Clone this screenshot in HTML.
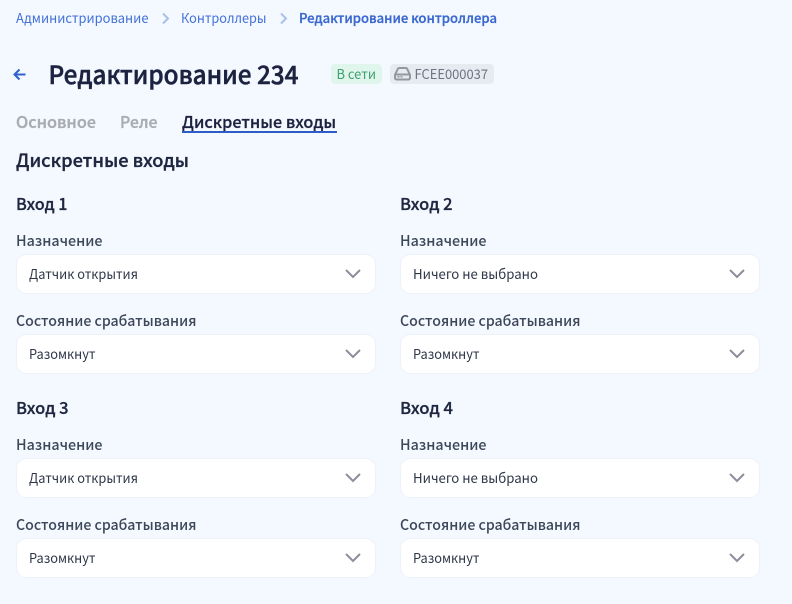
<!DOCTYPE html>
<html lang="ru">
<head>
<meta charset="utf-8">
<title>Редактирование 234</title>
<style>
html,body{margin:0;padding:0;width:792px;height:604px;overflow:hidden;background:#f4f8ff;}
svg{display:block;position:absolute;left:0;top:0;}
text{font-family:"Noto Sans CJK SC","Liberation Sans",sans-serif;}
.bc{font-size:13.5px;fill:#4271d6;font-weight:400;}
.bcb{font-size:13.5px;fill:#3a68cf;font-weight:500;stroke:#3a68cf;stroke-width:.3px;}
.h1{font-size:25px;fill:#1c2340;font-weight:500;stroke:#1c2340;stroke-width:.5px;}
.tab{font-size:16.5px;fill:#a9abb2;font-weight:500;stroke:#a9abb2;stroke-width:.35px;}
.tabon{font-size:16.5px;fill:#1c2340;font-weight:500;stroke:#1c2340;stroke-width:.25px;}
.h2{font-size:18.5px;fill:#1f2740;font-weight:500;stroke:#1f2740;stroke-width:.35px;}
.h3{font-size:16.5px;fill:#1f2740;font-weight:500;stroke:#1f2740;stroke-width:.3px;}
.lb{font-size:14.5px;fill:#3c4759;font-weight:500;}
.val{font-size:13.5px;fill:#2e3648;font-weight:400;}
.box{fill:#fff;stroke:#eef1f7;stroke-width:1;}
.chev{fill:none;stroke:#8b8e9c;stroke-width:2;}
</style>
</head>
<body>
<svg width="792" height="604" viewBox="0 0 792 604" xmlns="http://www.w3.org/2000/svg">
<text class="bc" x="16" y="23" textLength="132.5" lengthAdjust="spacingAndGlyphs">Администрирование</text>
<path d="M163 13.500L168 18.500L163 23.500" fill="none" stroke="#a9c0ea" stroke-width="2"/>
<text class="bc" x="181" y="23" textLength="85.500" lengthAdjust="spacingAndGlyphs">Контроллеры</text>
<path d="M281 13.500L286 18.500L281 23.500" fill="none" stroke="#a9c0ea" stroke-width="2"/>
<text class="bcb" x="299" y="23" textLength="198" lengthAdjust="spacingAndGlyphs">Редактирование контроллера</text>

<path d="M25.500 74.500H15.500M19.500 69.500L14.500 74.500L19.500 79.500" fill="none" stroke="#2f62cc" stroke-width="2"/>
<text class="h1" x="48.500" y="84" textLength="250" lengthAdjust="spacingAndGlyphs">Редактирование 234</text>

<rect x="331" y="64" width="51" height="20" rx="4" fill="#e0f6ec"/>
<text x="336.500" y="79" font-size="13.5" fill="#3f9e72" textLength="39.500" lengthAdjust="spacingAndGlyphs">В сети</text>
<rect x="390" y="64" width="104" height="20" rx="4" fill="#e6eaf1"/>
<path d="M395 75L397.500 69.500Q398 68 399.500 68H405.500Q407 68 407.500 69.500L410 75V77.500Q410 79.500 408 79.500H397Q395 79.500 395 77.500Z M395 74.500H410" fill="none" stroke="#94979f" stroke-width="2"/>
<rect x="397.500" y="76" width="2" height="1.500" fill="#94979f"/>
<rect x="400.500" y="76" width="2" height="1.500" fill="#94979f"/>
<text x="414.500" y="79" font-size="13.5" fill="#6c7483" textLength="73.500" lengthAdjust="spacingAndGlyphs">FCEE000037</text>

<text class="tab" x="16" y="128" textLength="80" lengthAdjust="spacingAndGlyphs">Основное</text>
<text class="tab" x="120" y="128" textLength="37.500" lengthAdjust="spacingAndGlyphs">Реле</text>
<text class="tabon" x="182" y="128" textLength="154" lengthAdjust="spacingAndGlyphs">Дискретные входы</text>
<rect x="182" y="131" width="155" height="2" fill="#2b5cc8"/>

<text class="h2" x="16" y="167" textLength="173" lengthAdjust="spacingAndGlyphs">Дискретные входы</text>

<!-- Вход 1 -->
<text class="h3" x="16" y="210" textLength="51.500" lengthAdjust="spacingAndGlyphs">Вход 1</text>
<text class="lb" x="16" y="246" textLength="86.500" lengthAdjust="spacingAndGlyphs">Назначение</text>
<rect class="box" x="16.500" y="254.500" width="359" height="39" rx="10"/>
<text class="val" x="29" y="279" textLength="109" lengthAdjust="spacingAndGlyphs">Датчик открытия</text>
<path class="chev" d="M346 270L353 277L360 270"/>
<text class="lb" x="16" y="326" textLength="180.500" lengthAdjust="spacingAndGlyphs">Состояние срабатывания</text>
<rect class="box" x="16.500" y="334.500" width="359" height="39" rx="10"/>
<text class="val" x="29" y="359" textLength="66.500" lengthAdjust="spacingAndGlyphs">Разомкнут</text>
<path class="chev" d="M346 350L353 357L360 350"/>

<!-- Вход 2 -->
<text class="h3" x="400" y="210" textLength="52.500" lengthAdjust="spacingAndGlyphs">Вход 2</text>
<text class="lb" x="400" y="246" textLength="86.500" lengthAdjust="spacingAndGlyphs">Назначение</text>
<rect class="box" x="400.500" y="254.500" width="359" height="39" rx="10"/>
<text class="val" x="413" y="279" textLength="125" lengthAdjust="spacingAndGlyphs">Ничего не выбрано</text>
<path class="chev" d="M730 270L737 277L744 270"/>
<text class="lb" x="400" y="326" textLength="180.500" lengthAdjust="spacingAndGlyphs">Состояние срабатывания</text>
<rect class="box" x="400.500" y="334.500" width="359" height="39" rx="10"/>
<text class="val" x="413" y="359" textLength="66.500" lengthAdjust="spacingAndGlyphs">Разомкнут</text>
<path class="chev" d="M730 350L737 357L744 350"/>

<!-- Вход 3 -->
<text class="h3" x="16" y="414" textLength="52.500" lengthAdjust="spacingAndGlyphs">Вход 3</text>
<text class="lb" x="16" y="450" textLength="86.500" lengthAdjust="spacingAndGlyphs">Назначение</text>
<rect class="box" x="16.500" y="458.500" width="359" height="39" rx="10"/>
<text class="val" x="29" y="483" textLength="109" lengthAdjust="spacingAndGlyphs">Датчик открытия</text>
<path class="chev" d="M346 474L353 481L360 474"/>
<text class="lb" x="16" y="530" textLength="180.500" lengthAdjust="spacingAndGlyphs">Состояние срабатывания</text>
<rect class="box" x="16.500" y="538.500" width="359" height="39" rx="10"/>
<text class="val" x="29" y="563" textLength="66.500" lengthAdjust="spacingAndGlyphs">Разомкнут</text>
<path class="chev" d="M346 554L353 561L360 554"/>

<!-- Вход 4 -->
<text class="h3" x="400" y="414" textLength="53" lengthAdjust="spacingAndGlyphs">Вход 4</text>
<text class="lb" x="400" y="450" textLength="86.500" lengthAdjust="spacingAndGlyphs">Назначение</text>
<rect class="box" x="400.500" y="458.500" width="359" height="39" rx="10"/>
<text class="val" x="413" y="483" textLength="125" lengthAdjust="spacingAndGlyphs">Ничего не выбрано</text>
<path class="chev" d="M730 474L737 481L744 474"/>
<text class="lb" x="400" y="530" textLength="180.500" lengthAdjust="spacingAndGlyphs">Состояние срабатывания</text>
<rect class="box" x="400.500" y="538.500" width="359" height="39" rx="10"/>
<text class="val" x="413" y="563" textLength="66.500" lengthAdjust="spacingAndGlyphs">Разомкнут</text>
<path class="chev" d="M730 554L737 561L744 554"/>
</svg>
</body>
</html>
